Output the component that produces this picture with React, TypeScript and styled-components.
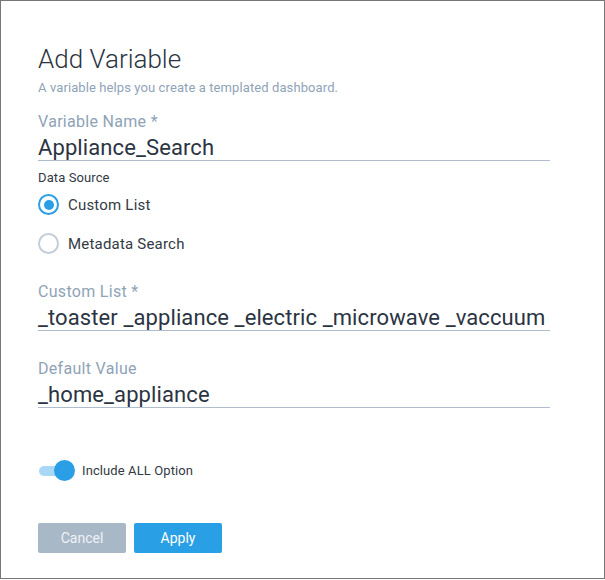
import React from "react";
import styled, { createGlobalStyle } from "styled-components";

const Global = createGlobalStyle`
  html, body { margin: 0; padding: 0; background: #ffffff; }
  body { font-family: Roboto, "Liberation Sans", sans-serif; }
  * { box-sizing: border-box; }
`;

const Dialog = styled.div`
  width: 605px;
  height: 579px;
  border: 1px solid #777777;
  background: #ffffff;
  padding: 42px 0 0 37px;
  display: flex;
  flex-direction: column;
`;

const Form = styled.div`
  width: 512px;
  display: flex;
  flex-direction: column;
`;

const Title = styled.h1`
  margin: 0;
  font-size: 26px;
  line-height: 32px;
  font-weight: 300;
  color: #2b3442;
`;

const Subtitle = styled.p`
  margin: 5px 0 0;
  font-size: 13px;
  line-height: 16px;
  letter-spacing: 0.1px;
  color: #8fa3b7;
`;

const Field = styled.div<{ $top: number }>`
  margin-top: ${(p) => p.$top}px;
  display: flex;
  flex-direction: column;
  gap: 4px;
`;

const Label = styled.label`
  font-size: 16px;
  line-height: 20px;
  letter-spacing: 0.3px;
  color: #8fa3b7;
`;

const Value = styled.div`
  font-size: 22px;
  line-height: 24px;
  letter-spacing: 0.1px;
  color: #2b3442;
  border-bottom: 1px solid #aebccb;
  white-space: nowrap;
`;

const SectionTitle = styled.div`
  margin-top: 9px;
  font-size: 13px;
  line-height: 16px;
  letter-spacing: 0.1px;
  color: #333a44;
`;

const RadioGroup = styled.div`
  margin-top: 8px;
  display: flex;
  flex-direction: column;
  gap: 18px;
`;

const RadioRow = styled.div`
  display: flex;
  align-items: center;
  gap: 9px;
  height: 21px;
`;

const RadioCircle = styled.span<{ $checked?: boolean }>`
  width: 21px;
  height: 21px;
  border-radius: 50%;
  border: 2px solid ${(p) => (p.$checked ? "#2a9fe5" : "#c3cdd8")};
  display: flex;
  align-items: center;
  justify-content: center;
  &::after {
    content: "";
    display: ${(p) => (p.$checked ? "block" : "none")};
    width: 10px;
    height: 10px;
    border-radius: 50%;
    background: #2a9fe5;
  }
`;

const RadioText = styled.span`
  font-size: 15px;
  letter-spacing: 0.2px;
  color: #333a44;
`;

const ToggleRow = styled.div`
  margin-top: 52px;
  display: flex;
  align-items: center;
  gap: 8px;
  height: 21px;
`;

const Toggle = styled.span`
  position: relative;
  width: 36px;
  height: 21px;
  display: block;
  &::before {
    content: "";
    position: absolute;
    left: 1px;
    top: 6px;
    width: 30px;
    height: 10px;
    border-radius: 5px;
    background: #a8d8f5;
  }
  &::after {
    content: "";
    position: absolute;
    left: 16px;
    top: 0;
    width: 21px;
    height: 21px;
    border-radius: 50%;
    background: #2a9fe5;
  }
`;

const ToggleText = styled.span`
  font-size: 13px;
  letter-spacing: 0.1px;
  color: #333a44;
`;

const Buttons = styled.div`
  margin-top: 42px;
  display: flex;
  gap: 8px;
`;

const Button = styled.button<{ $primary?: boolean }>`
  width: 88px;
  height: 30px;
  border: none;
  border-radius: 2px;
  font-family: Roboto, "Liberation Sans", sans-serif;
  font-size: 14px;
  color: ${(p) => (p.$primary ? "#ffffff" : "#eef2f6")};
  background: ${(p) => (p.$primary ? "#29a0e6" : "#a9b8c7")};
  padding: 0;
`;

export default function App() {
  return (
    <>
      <Global />
      <Dialog>
        <Form>
          <Title>Add Variable</Title>
          <Subtitle>A variable helps you create a templated dashboard.</Subtitle>
          <Field $top={16}>
            <Label>Variable Name *</Label>
            <Value>Appliance_Search</Value>
          </Field>
          <SectionTitle>Data Source</SectionTitle>
          <RadioGroup>
            <RadioRow>
              <RadioCircle $checked />
              <RadioText>Custom List</RadioText>
            </RadioRow>
            <RadioRow>
              <RadioCircle />
              <RadioText>Metadata Search</RadioText>
            </RadioRow>
          </RadioGroup>
          <Field $top={28}>
            <Label>Custom List *</Label>
            <Value>_toaster _appliance _electric _microwave _vaccuum</Value>
          </Field>
          <Field $top={28}>
            <Label>Default Value</Label>
            <Value>_home_appliance</Value>
          </Field>
          <ToggleRow>
            <Toggle />
            <ToggleText>Include ALL Option</ToggleText>
          </ToggleRow>
          <Buttons>
            <Button>Cancel</Button>
            <Button $primary>Apply</Button>
          </Buttons>
        </Form>
      </Dialog>
    </>
  );
}
